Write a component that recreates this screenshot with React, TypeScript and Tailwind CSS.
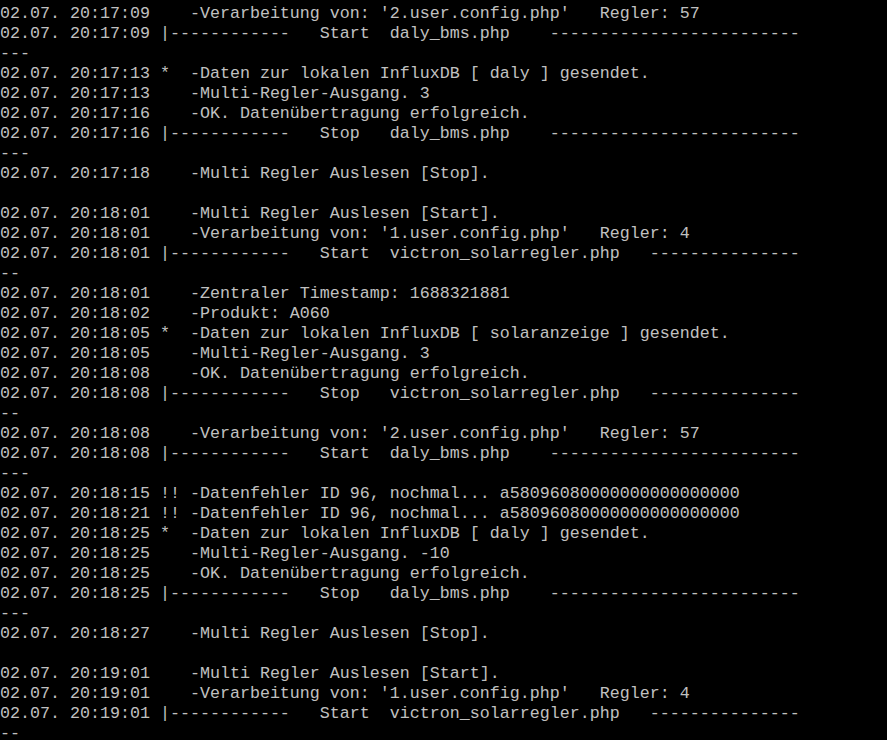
const lines: string[] = [
  "02.07. 20:17:09    -Verarbeitung von: '2.user.config.php'   Regler: 57",
  "02.07. 20:17:09 |------------   Start  daly_bms.php    -------------------------",
  "---",
  "02.07. 20:17:13 *  -Daten zur lokalen InfluxDB [ daly ] gesendet.",
  "02.07. 20:17:13    -Multi-Regler-Ausgang. 3",
  "02.07. 20:17:16    -OK. Datenübertragung erfolgreich.",
  "02.07. 20:17:16 |------------   Stop   daly_bms.php    -------------------------",
  "---",
  "02.07. 20:17:18    -Multi Regler Auslesen [Stop].",
  "",
  "02.07. 20:18:01    -Multi Regler Auslesen [Start].",
  "02.07. 20:18:01    -Verarbeitung von: '1.user.config.php'   Regler: 4",
  "02.07. 20:18:01 |------------   Start  victron_solarregler.php   ---------------",
  "--",
  "02.07. 20:18:01    -Zentraler Timestamp: 1688321881",
  "02.07. 20:18:02    -Produkt: A060",
  "02.07. 20:18:05 *  -Daten zur lokalen InfluxDB [ solaranzeige ] gesendet.",
  "02.07. 20:18:05    -Multi-Regler-Ausgang. 3",
  "02.07. 20:18:08    -OK. Datenübertragung erfolgreich.",
  "02.07. 20:18:08 |------------   Stop   victron_solarregler.php   ---------------",
  "--",
  "02.07. 20:18:08    -Verarbeitung von: '2.user.config.php'   Regler: 57",
  "02.07. 20:18:08 |------------   Start  daly_bms.php    -------------------------",
  "---",
  "02.07. 20:18:15 !! -Datenfehler ID 96, nochmal... a5809608" + "0".repeat(16),
  "02.07. 20:18:21 !! -Datenfehler ID 96, nochmal... a5809608" + "0".repeat(16),
  "02.07. 20:18:25 *  -Daten zur lokalen InfluxDB [ daly ] gesendet.",
  "02.07. 20:18:25    -Multi-Regler-Ausgang. -10",
  "02.07. 20:18:25    -OK. Datenübertragung erfolgreich.",
  "02.07. 20:18:25 |------------   Stop   daly_bms.php    -------------------------",
  "---",
  "02.07. 20:18:27    -Multi Regler Auslesen [Stop].",
  "",
  "02.07. 20:19:01    -Multi Regler Auslesen [Start].",
  "02.07. 20:19:01    -Verarbeitung von: '1.user.config.php'   Regler: 4",
  "02.07. 20:19:01 |------------   Start  victron_solarregler.php   ---------------",
  "--",
];

export default function App() {
  return (
    <div className="w-[887px] h-[740px] overflow-hidden bg-black">
      <div className="pt-[4px] font-['Liberation_Mono',monospace] text-[16.67px] leading-[20px] text-[#c0c0c0] whitespace-pre">
        {lines.map((l, i) => (
          <div key={i} className="h-[20px]">
            {l}
          </div>
        ))}
      </div>
    </div>
  );
}
